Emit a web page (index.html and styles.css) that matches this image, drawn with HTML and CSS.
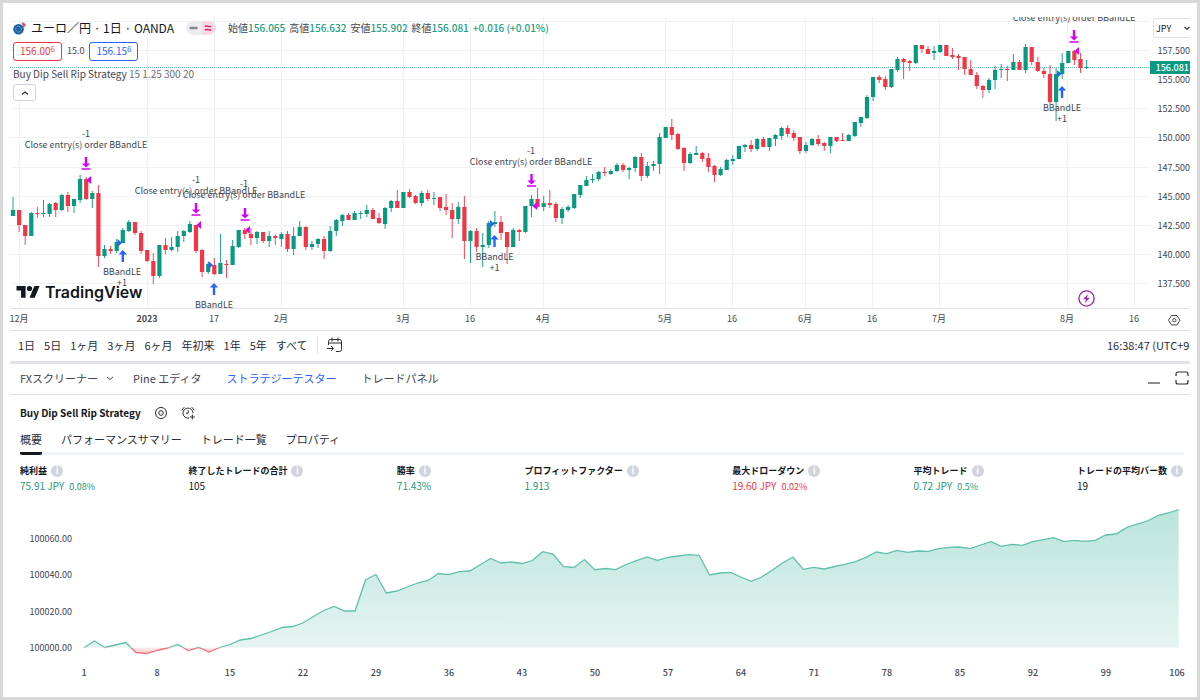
FILE: index.html
```html
<!DOCTYPE html>
<html lang="ja">
<head>
<meta charset="utf-8">
<title>ユーロ／円 · 1日 · OANDA</title>
<link rel="stylesheet" href="styles.css">
</head>
<body>
<div class="frame">
  <main class="app">
    <section class="chart">
      <svg id="price-chart" class="plot" viewBox="10 17 1180 313" role="img" aria-label="ユーロ／円 チャート"></svg>
      <div class="legend">
        <div class="symbol-row">
          <svg class="flag" viewBox="0 0 14 14" aria-hidden="true"><circle cx="9" cy="5" r="4.500" fill="#eceef3"/><path d="M9 1.500A3.500 3.500 0 0 1 12.500 5L10 6z" fill="#e8404c"/><circle cx="5.500" cy="8.200" r="5.300" fill="#1c62b0"/><circle cx="5.500" cy="8.200" r="2.800" fill="none" stroke="#d8c84a" stroke-dasharray="1 1.200"/></svg>
          <h1 class="symbol">ユーロ／円 · 1日 · OANDA</h1>
          <span class="status"><span class="status-part"><svg viewBox="0 0 15 14"><path d="M4.500 7h6" stroke="#868993" stroke-width="2.500" stroke-linecap="round"/></svg></span><span class="status-part pink"><svg viewBox="0 0 15 14"><path d="M4 5.800c2-2.400 3.500 1.200 6-.6M4 9.200c2-2.400 3.500 1.200 6-.6" fill="none" stroke="#e0195f" stroke-width="1.400"/></svg></span></span>
          <div class="ohlc">
            <span>始値<b>156.065</b></span><span>高値<b>156.632</b></span><span>安値<b>155.902</b></span><span>終値<b>156.081</b></span><b>+0.016 (+0.01%)</b>
          </div>
        </div>
        <div class="quote-row">
          <button class="quote sell">156.00<small>6</small></button>
          <span class="spread">15.0</span>
          <button class="quote buy">156.15<small>6</small></button>
        </div>
        <div class="strategy-row">Buy Dip Sell Rip Strategy <span>15 1.25 300 20</span></div>
        <button class="collapse" aria-label="折りたたむ"><svg viewBox="0 0 10 10"><path d="M2 6.500 5 4l3 2.500" fill="none" stroke="#2a2e39" stroke-width="1.200"/></svg></button>
      </div>
      <div class="currency">
        <select aria-label="通貨"><option>JPY</option></select>
        <svg viewBox="0 0 6 6" aria-hidden="true"><path d="M.5 2 3 4.300 5.500 2" fill="none" stroke="#2a2e39" stroke-width="1.200"/></svg>
      </div>
    </section>

    <div class="ranges">
      <button>1日</button><button>5日</button><button>1ヶ月</button><button>3ヶ月</button><button>6ヶ月</button><button>年初来</button><button>1年</button><button>5年</button><button>すべて</button>
      <span class="divider"></span>
      <button aria-label="日付へ移動"><svg class="goto" viewBox="0 0 16 16"><path d="M1.500 8V4.500a2 2 0 0 1 2-2h9a2 2 0 0 1 2 2v8a2 2 0 0 1-2 2H9M1.500 6h13M5 .5v4M11 .5v4M0 11.500h6M4 9l2.500 2.500L4 14" fill="none" stroke="#2a2e39"/></svg></button>
      <button class="clock">16:38:47 (UTC+9)</button>
    </div>

    <nav class="panel-tabs">
      <button class="with-arrow">FXスクリーナー <svg viewBox="0 0 8 8"><path d="M1 3l3 2.500L7 3" fill="none" stroke="#434651"/></svg></button>
      <button>Pine エディタ</button>
      <button class="active">ストラテジーテスター</button>
      <button>トレードパネル</button>
      <span class="window-tools">
        <button aria-label="最小化"><svg viewBox="0 0 14 14"><path d="M1 12h12" stroke="#50535e" stroke-width="1.300"/></svg></button>
        <button aria-label="最大化"><svg viewBox="0 0 14 14"><path d="M1 5V3a2 2 0 0 1 2-2h8a2 2 0 0 1 2 2v2M1 9v2a2 2 0 0 0 2 2h8a2 2 0 0 0 2-2V9" fill="none" stroke="#2a2e39" stroke-width="1.200"/></svg></button>
      </span>
    </nav>

    <section class="tester">
      <div class="tester-head">
        <h2>Buy Dip Sell Rip Strategy</h2>
        <button aria-label="設定"><svg viewBox="0 0 14 14"><g fill="none" stroke="#2a2e39"><path d="M4.700 2 7 1.300 9.300 2l2.200 1.600L12.600 7l-1.100 3.400L9.300 12 7 12.700 4.700 12l-2.200-1.600L1.400 7l1.100-3.400z"/><circle cx="7" cy="7" r="2.300"/></g></svg></button>
        <button aria-label="アラートを追加"><svg viewBox="0 0 14 14"><g fill="none" stroke="#2a2e39"><path d="M12 7.200A5 5 0 1 0 8 12M7.200 4.200v3H5M1 4.200A5 5 0 0 1 3.500 1.300M10.500 1.300A5 5 0 0 1 13 4.200M11.300 8.500v5M8.800 11h5"/></g></svg></button>
      </div>
      <nav class="report-tabs">
        <button class="current">概要</button><button>パフォーマンスサマリー</button><button>トレード一覧</button><button>プロパティ</button>
      </nav>
      <dl class="stats">
        <div><dt>純利益 <i>i</i></dt><dd class="up">75.91 JPY <small>0.08%</small></dd></div>
        <div><dt>終了したトレードの合計 <i>i</i></dt><dd>105</dd></div>
        <div><dt>勝率 <i>i</i></dt><dd class="up">71.43%</dd></div>
        <div><dt>プロフィットファクター <i>i</i></dt><dd class="up">1.913</dd></div>
        <div><dt>最大ドローダウン <i>i</i></dt><dd class="down">19.60 JPY <small>0.02%</small></dd></div>
        <div><dt>平均トレード <i>i</i></dt><dd class="up">0.72 JPY <small>0.5%</small></dd></div>
        <div><dt>トレードの平均バー数 <i>i</i></dt><dd>19</dd></div>
      </dl>
      <svg id="equity-chart" class="plot" viewBox="10 494 1180 192" role="img" aria-label="純資産"></svg>
    </section>
  </main>
</div>
<script src="charts.js"></script>
</body>
</html>
```
FILE: styles.css
```css
* { box-sizing: border-box; }
body {
  margin: 0;
  color: #131722;
  background: #fff;
  font: 11px/16px "Noto Sans CJK JP", "Open Sans", sans-serif;
}
button, select { font: inherit; color: inherit; background: none; border: 0; padding: 0; margin: 0; white-space: nowrap; }
button { display: inline-flex; align-items: center; cursor: pointer; }
h1, h2, dl, dd { margin: 0; }
.frame { min-height: 100vh; padding: 14px 7px 8px; border: 3px solid #d8d8d8; }
.app { overflow: hidden; }
.plot { display: block; width: 100%; height: auto; }

.chart { position: relative; border-bottom: 1px solid #e0e3eb; }
.legend { position: absolute; top: 0; left: 3px; }
.symbol-row { display: flex; align-items: center; height: 22px; }
.flag { width: 14px; height: 14px; margin-right: 4px; }
.symbol { font-size: 12px; font-weight: 400; line-height: 20px; white-space: nowrap; }
.status { display: flex; height: 14px; margin: 0 12px; border-radius: 7px; overflow: hidden; background: #ecedf0; }
.status-part { width: 15px; }
.status-part svg { display: block; width: 15px; height: 14px; }
.pink { background: #fbd9e5; }
.ohlc { display: flex; gap: 4px; font-size: 10px; color: #434651; white-space: nowrap; }
.ohlc b { font-weight: 500; color: #22a083; }
.quote-row { display: flex; align-items: center; gap: 5px; height: 24px; font-size: 10px; }
.quote { height: 19px; padding: 0 6px; border: 1px solid; border-radius: 3px; background: #fff; }
.quote small { font-size: 8px; line-height: 12px; align-self: flex-start; }
.spread { font-size: 9px; color: #434651; }
.sell { color: #f23645; }
.buy { color: #2962ff; }
.strategy-row { height: 21px; line-height: 21px; font-size: 10px; color: #434651; }
.strategy-row span { color: #6a6d78; }
.collapse { width: 23px; height: 17px; justify-content: center; border: 1px solid #d1d4dc; border-radius: 3px; background: #fff; }
.collapse svg { width: 10px; height: 10px; }

.currency { position: absolute; top: 1px; right: 0; width: 37px; height: 20px; overflow: hidden; border: 1px solid #e0e3eb; border-right: 0; border-radius: 3px 0 0 3px; background: #fff; }
.currency select { width: 100%; height: 18px; padding-left: 2px; appearance: none; font-size: 9px; }
.currency svg { position: absolute; right: 0; top: 6px; width: 6px; height: 6px; pointer-events: none; }

.ranges { display: flex; align-items: center; gap: 9px; height: 33px; padding: 0 0 2px 8px; border-bottom: 3px solid #e0e3eb; }
.ranges button { flex: none; color: #2a2e39; }
.divider { width: 1px; height: 18px; background: #e0e3eb; }
.goto { width: 16px; height: 16px; }
.ranges .clock { width: 83px; margin-left: auto; overflow: hidden; }

.panel-tabs { display: flex; align-items: center; gap: 25px; height: 31px; padding: 0 1px 2px 10px; border-bottom: 1px solid #e0e3eb; color: #434651; }
.with-arrow svg { width: 8px; height: 8px; margin-left: 8px; }
.with-arrow { margin-right: -6px; }
.panel-tabs .active { color: #2962ff; }
.window-tools { display: flex; gap: 14px; margin-left: auto; }
.window-tools svg { display: block; width: 14px; height: 14px; }

.tester-head { display: flex; align-items: center; gap: 13px; height: 36px; padding-left: 10px; }
.tester-head h2 { font-size: 10px; font-weight: 700; }
.tester-head svg { display: block; width: 14px; height: 14px; }
.report-tabs { display: flex; gap: 19px; height: 24px; margin: 0 6px 0 10px; border-bottom: 3px solid #f0f3fa; color: #2a2e39; }
.report-tabs button { height: 24px; padding-bottom: 6px; border-bottom: 3px solid transparent; }
.report-tabs .current { border-color: #131722; border-radius: 2px; }
.stats { display: flex; justify-content: space-between; gap: 8px; padding: 8px 7px 0 10px; font-size: 10px; line-height: 15px; white-space: nowrap; }
.stats dt { display: flex; align-items: center; gap: 4px; font-size: 9px; font-weight: 700; }
.stats i { width: 12px; height: 12px; border-radius: 50%; background: #d1d4dc; color: #fff; font: 700 9px/12px "Noto Sans CJK JP", sans-serif; text-align: center; }
.stats small { margin-left: 3px; font-size: 9px; }
.up { color: #22997c; }
.down { color: #f23645; }

.grid { stroke: #f0f1f4; }
.axis { stroke: #e0e3eb; }
.last { stroke: #6fc2b4; stroke-dasharray: 1 1; }
.candle-up { stroke: #089981; fill: #089981; }
.candle-down { stroke: #f23645; fill: #f23645; }
.wick { stroke-width: 1; opacity: .9; }
.body { stroke: none; }
.label { font-size: 9px; fill: #434651; text-anchor: middle; }
.note { font-size: 9px; fill: #434651; text-anchor: middle; }
.end { text-anchor: end; }
.strong { font-weight: 700; }
.tick { font-weight: 500; }
.exit { fill: #d500f9; }
.entry { fill: #2962ff; }
.tag { fill: #089981; }
.tag-text { fill: #fff; font-size: 9px; font-weight: 500; text-anchor: end; }
.brand { fill: #131722; }
.brand-text { font: 600 16px Inter, sans-serif; fill: #131722; }
.flash-ring { fill: #fff; stroke: #9c27b0; stroke-width: 1.4; }
.flash { fill: #9c27b0; }
.hex { fill: none; stroke: #434651; }
.gain-line { fill: none; stroke: #5fc0ad; stroke-width: 1.3; }
.loss-line { fill: none; stroke: #f7727d; stroke-width: 1.3; }
```
FILE: charts.js
```js
// Each bar: direction, high, body top, body bottom, low (vertical chart units).
const bars = `
G 197 210 216 216|R 210 210 225 232|R 225 225 236 245|G 212 213 236 236|R 207 213 214 218|G 200 213 214 217
G 203 204 214 217|R 202 203 210 217|G 194 195 210 211|R 192 195 206 212|G 199 199 206 213|G 175 179 200 203
R 177 179 199 200|G 191 193 199 208|R 185 193 256 267|G 245 249 256 258|R 246 249 251 254|G 239 242 251 253
G 228 230 243 243|G 220 222 231 232|R 222 222 233 235|R 231 233 251 254|R 250 250 261 262|R 253 261 276 284
G 245 245 276 278|R 238 245 250 254|G 237 247 250 251|G 231 236 247 252|G 230 231 236 242|G 221 224 232 233
R 225 225 251 253|R 249 250 272 277|G 262 264 272 274|R 258 265 274 275|G 234 263 274 274|R 260 264 265 278
G 240 246 265 265|G 230 230 247 248|R 228 230 234 239|R 228 234 238 245|G 231 232 238 244|R 232 232 241 243
G 231 236 241 247|R 235 236 238 245|G 232 234 239 247|R 231 234 249 252|G 227 236 249 255|G 221 227 236 236
R 226 227 247 250|G 241 244 247 250|G 238 239 244 248|R 236 239 251 259|G 226 231 251 252|G 219 220 231 236
G 214 215 221 226|R 213 215 220 220|G 211 213 220 220|G 211 213 214 219|G 205 210 214 217|R 208 210 219 219
R 213 218 223 224|G 207 208 224 229|G 200 201 208 212|R 190 201 208 208|G 192 192 208 208|R 189 192 197 198
R 195 196 203 204|G 191 193 203 206|R 190 193 199 201|G 192 198 199 205|R 197 197 208 211|R 194 207 210 215
R 203 210 219 238|G 202 207 219 224|R 196 207 241 259|G 230 231 241 263|R 228 231 247 252|G 233 245 247 267
G 221 223 245 248|G 211 222 224 227|R 216 222 233 240|R 232 232 247 264|G 228 230 247 247|R 229 230 232 241
G 206 206 232 233|G 195 199 206 217|R 188 199 207 208|G 196 203 207 211|R 190 203 205 208|R 202 204 218 222
G 207 209 218 224|G 205 207 210 212|G 194 194 208 209|G 185 185 195 198|G 176 180 186 186|G 174 179 180 183
G 171 172 179 181|R 167 172 173 176|G 169 171 174 175|G 163 165 171 172|R 163 165 170 172|G 167 168 170 179
G 156 157 168 172|R 153 157 176 181|G 162 166 176 178|G 161 164 166 171|G 133 137 164 174|G 127 127 138 138
R 119 127 135 140|R 133 134 149 150|R 147 148 163 171|G 152 154 163 164|G 146 153 155 155|R 152 153 159 162
R 153 158 167 172|R 165 166 175 182|G 167 169 175 176|G 159 160 170 170|G 155 159 161 165|G 146 146 159 159
G 144 145 147 152|R 140 145 149 152|G 138 139 149 151|R 137 139 147 147|G 138 138 147 151|G 134 135 139 146
G 127 128 136 140|R 125 128 134 137|R 130 133 138 141|R 137 137 151 154|G 142 145 151 153|G 138 139 145 146
R 135 139 144 146|R 142 143 146 151|G 137 137 146 153|R 137 137 141 142|R 133 140 141 141|G 134 135 141 141
G 122 122 136 137|G 117 117 123 127|G 95 97 118 119|G 77 77 97 101|R 75 77 80 83|R 76 79 87 90
G 69 69 87 88|G 57 59 70 72|R 58 59 62 79|R 60 61 63 71|G 45 45 63 64|R 45 45 49 53
R 46 49 54 54|G 46 51 53 60|G 45 45 52 53|R 45 45 56 56|R 48 55 57 59|R 54 56 58 70
R 57 57 69 75|R 60 69 75 75|R 72 75 86 89|R 85 86 90 98|G 78 80 90 93|G 66 70 80 89
G 64 69 70 78|R 66 69 70 81|G 54 62 70 70|R 60 62 70 70|G 44 47 70 73|R 47 47 62 65
R 57 62 71 72|R 68 71 74 78|R 65 74 102 104|G 68 74 102 121|G 53 63 74 79|G 51 51 63 63
R 50 51 60 65|R 53 59 68 73|G 60 67 68 69`.trim().split(/[\n|]/).map(b => b.split(' '));

const text = (x, y, s, cls) => `<text x="${x}" y="${y}" class="${cls}">${s}</text>`;
const line = (x1, y1, x2, y2, cls) => `<line x1="${x1}" y1="${y1}" x2="${x2}" y2="${y2}" class="${cls}"/>`;

function drawPrice() {
  const months = [[19, '12月'], [147, '2023'], [214, '17'], [281, '2月'], [403, '3月'], [470, '16'], [543, '4月'],
    [665, '5月'], [732, '16'], [805, '6月'], [872, '16'], [939, '7月'], [1067, '8月'], [1134, '16']];
  let s = '';
  months.forEach(([x, t]) => {
    s += line(x + 0.5, 17, x + 0.5, 308, 'grid') + text(x, 322, t, t === '2023' ? 'label strong' : 'label');
  });
  for (let i = 0; i < 10; i++) {
    const y = Math.round(21 + i * 29.1) + 0.5;
    s += line(10, y, 1150, y, 'grid');
    if (i) s += text(1190, y + 3.5, (160 - i * 2.5).toFixed(3), 'label end');
  }
  s += line(10, 308.5, 1190, 308.5, 'axis') + line(10, 67.5, 1150, 67.5, 'last');
  s += `<g class="brand" transform="translate(16.500 283.400) scale(.65)"><path d="M14 22H7V11H0V4h14zM28 22h-8l7.500-18h8z"/><circle cx="20" cy="8" r="4"/></g>` + text(45, 298, 'TradingView', 'brand-text');
  bars.forEach(([d, h, t, b, l], i) => {
    const x = 13 + i * 6.1;
    s += `<g class="${d === 'G' ? 'candle-up' : 'candle-down'}">` + line(x, h, x, l, 'wick') +
      `<rect class="body" x="${x - 2.1}" y="${t}" width="4.200" height="${Math.max(b - t, 1)}"/></g>`;
  });
  [[86, 157], [196, 203], [245, 208], [531.5, 174], [1074, 30]].forEach(([x, y]) => {
    s += `<path class="exit" d="M${x - 1.200} ${y}h2.400v6.500h3L${x} ${y + 10.500}l-4.200-4h3zM${x - 4.500} ${y + 11.300}h9v1.500h-9z"/>`;
  });
  [[122.800, 250], [214, 283], [494.500, 235], [1062, 86]].forEach(([x, y]) => {
    s += `<path class="entry" d="M${x} ${y}l4.200 4.500h-3V${y + 12}h-2.400v-7.500h-3z"/>`;
  });
  [[86.500, 180], [196.500, 225], [245.300, 230], [532.500, 206], [1074.500, 51]].forEach(([x, y]) => {
    s += `<path class="exit" d="M${x} ${y}l4.500-4v8z"/>`;
  });
  [[122, 243], [213, 265], [494.500, 224], [1061.500, 74]].forEach(([x, y]) => {
    s += `<path class="entry" d="M${x} ${y}l-4.500-4v8z"/>`;
  });
  [[86, 148], [196, 194], [244, 198], [531, 165], [1074, 21]].forEach(([x, y]) => {
    s += text(x, y, 'Close entry(s) order BBandLE', 'note');
    if (y > 30) s += text(x, y - 11, '-1', 'note');
  });
  [[122, 275], [214, 308], [494.500, 260], [1062, 111]].forEach(([x, y]) => {
    s += text(x, y, 'BBandLE', 'note');
    if (y < 300) s += text(x, y + 11, '+1', 'note');
  });
  s += `<rect class="tag" x="1150" y="61" width="40" height="13"/>` + text(1189, 71, '156.081', 'tag-text');
  s += `<circle class="flash-ring" cx="1086.500" cy="298.500" r="7.600"/><path class="flash" d="M1088 294l-5 5.200h3l-1.200 4 5-5.400h-3z"/>`;
  s += `<path class="hex" d="M1171.500 315.500h5.500l3 4.700-3 4.700h-5.500l-3-4.700z"/><circle class="hex" cx="1174.300" cy="320.200" r="1.700"/>`;
  document.getElementById('price-chart').innerHTML = s;
}

function drawEquity() {
  const zero = 647.7;
  const ys = [647.7, 641, 647.5, 645, 642.5, 652.5, 653.5, 650.5, 648, 644.5, 650.5, 647.3, 652, 647.5, 644.5, 640, 638.5, 635,
    631.5, 627.5, 626.5, 623, 616.5, 610.5, 606.5, 611, 611, 580, 574.5, 593, 591, 587, 583, 580.5, 573.5, 574.7, 571.7, 571,
    564.7, 558.5, 563, 562, 563.5, 560.5, 551.7, 554, 566.7, 567.5, 559.5, 569.7, 568.5, 569.7, 564.5, 560.7, 557, 560.3, 557.3,
    556, 554.7, 555.3, 575, 573, 572.3, 577, 581.3, 577, 570.3, 563, 557, 569.3, 567.3, 569, 566.5, 564.3, 561.7, 557.3, 552,
    553.7, 550.3, 552.3, 551, 551.3, 548.7, 547.3, 547, 548.7, 545, 541.7, 546.3, 544.3, 545.3, 541.7, 539.7, 537.7, 541.7,
    540.3, 541.3, 540.3, 535, 534, 527.7, 524, 521, 515.7, 513, 509.7];
  const px = i => 84 + i * 10.425;
  const path = ys.map((y, i) => `${px(i).toFixed(1)} ${y}`).join('L');
  const area = `M${px(0)} ${zero}L${path}L${px(105)} ${zero}z`;
  let s = `<defs><linearGradient id="gain" gradientUnits="userSpaceOnUse" x1="0" y1="508" x2="0" y2="648"><stop stop-color="#b9e4db"/><stop offset="1" stop-color="#e7f5f2"/></linearGradient>
    <linearGradient id="loss" gradientUnits="userSpaceOnUse" x1="0" y1="648" x2="0" y2="654"><stop stop-color="#fdeaec"/><stop offset="1" stop-color="#fbc3c8"/></linearGradient>
    <clipPath id="above"><rect x="10" y="494" width="1180" height="153.700"/></clipPath><clipPath id="below"><rect x="10" y="647.700" width="1180" height="30"/></clipPath></defs>
    <g clip-path="url(#above)"><path d="${area}" fill="url(#gain)"/><path d="M${path}" class="gain-line"/></g>
    <g clip-path="url(#below)"><path d="${area}" fill="url(#loss)"/><path d="M${path}" class="loss-line"/></g>`;
  [60, 40, 20, 0].forEach((v, i) => { s += text(72, 542 + Math.round(i * 36.4), (100000 + v).toFixed(2), 'label end'); });
  for (let n = 1; n <= 106; n += 7) s += text(Math.round(px(n - 1)) - (n === 106 ? 2 : 0), 676, n, 'label tick');
  document.getElementById('equity-chart').innerHTML = s;
}

drawPrice();
drawEquity();
```
